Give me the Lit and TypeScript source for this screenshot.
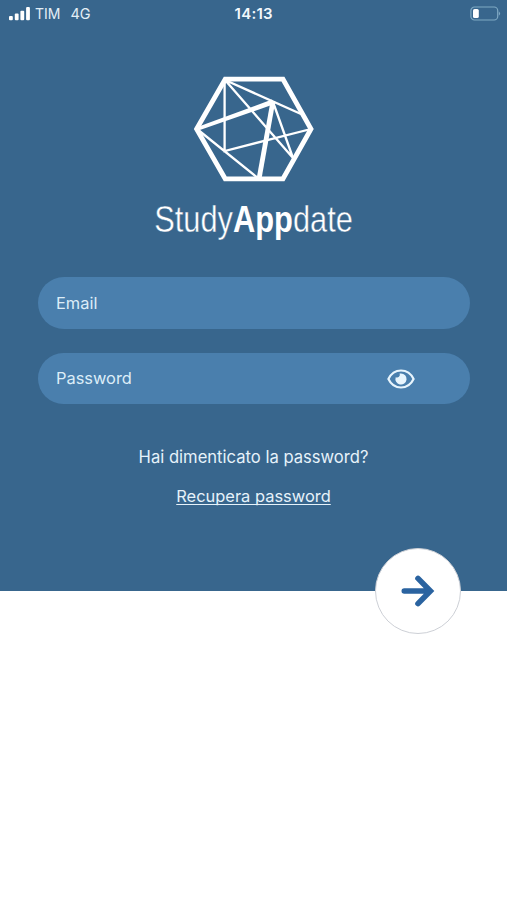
import { LitElement, html, css } from "lit";
import { customElement } from "lit/decorators.js";

@customElement("status-bar")
export class StatusBar extends LitElement {
  static styles = css`
    :host { display: grid; grid-template-columns: 1fr auto 1fr; align-items: center; height: 28px; padding: 0 6.5px 0 9px; color: #e3eef6; font: 400 14px/28px Inter, sans-serif; }
    .carrier { display: flex; align-items: center; }
    .signal { margin-right: 5px; }
    .network { margin-left: 10px; font-size: 14.5px; }
    .time { margin-right: 2px; font-weight: 600; font-size: 15px; letter-spacing: 0.25px; color: #f2f8fc; }
    .battery { justify-self: end; margin-top: -1px; }
    svg { display: block; }
  `;
  render() {
    return html`
      <div class="carrier">
        <svg class="signal" width="21" height="14" viewBox="0 0 21 14" fill="#fff">
          <rect x="0" y="9" width="3.8" height="4.2" rx="1" />
          <rect x="5.8" y="6.6" width="3.8" height="6.6" rx="1" />
          <rect x="11.4" y="3.8" width="3.8" height="9.4" rx="1" />
          <rect x="17.1" y="0" width="3.8" height="13.2" rx="1" />
        </svg>
        <span>TIM</span><span class="network">4G</span>
      </div>
      <div class="time">14:13</div>
      <svg class="battery" width="31" height="15" viewBox="0 0 31 15">
        <rect x="0.9" y="1" width="26.8" height="13" rx="3.6" fill="none" stroke="#7fa9c4" stroke-width="1.2" />
        <path d="M28.8 5.2 Q31.4 7.5 28.8 9.8 Z" fill="#7fa9c4" />
        <rect x="3" y="3" width="5.8" height="9" rx="1.6" fill="#fff" />
      </svg>`;
  }
}

@customElement("app-root")
export class AppRoot extends LitElement {
  static styles = css`
    :host { display: block; min-height: 900px; background: #fff; font-family: Inter, sans-serif; }
    .hero { position: relative; display: flex; flex-direction: column; height: 591px; background: #38668d; color: #e6f2fa; }
    svg { display: block; }
    .mark { margin: 46px auto 0; }
    .brand { margin: 10px auto 0; fill: #fff; font-family: "Liberation Sans", sans-serif; font-size: 37px; }
    .light { font-weight: 400; stroke: #38668d; stroke-width: 0.45px; }
    .bold { font-weight: 700; }
    .fields { display: flex; flex-direction: column; gap: 24px; margin: 29px 37px 0 37.5px; }
    .field { display: flex; align-items: center; box-sizing: border-box; height: 51.5px; padding: 0 55px 0 18.5px; border-radius: 26px; background: #4a7fad; }
    input { flex: 1; min-width: 0; border: 0; padding: 0; outline: 0; background: none; color: inherit; font: 400 16.4px/20px Inter, sans-serif; }
    input::placeholder { color: #dcedf8; opacity: 1; }
    .help { display: flex; flex-direction: column; align-items: center; margin-top: 42px; font-size: 16.6px; line-height: 22px; }
    .recover { margin-top: 17px; color: inherit; font-size: 16.45px; text-decoration: underline; text-decoration-thickness: 1px; text-underline-offset: 2px; text-decoration-skip-ink: none; }
    .submit { position: absolute; right: 46px; bottom: -43px; display: grid; place-items: center; box-sizing: border-box; width: 86px; height: 86px; padding: 0; border: 1px solid #cdd0d6; border-radius: 50%; background: #fff; }
    .eye { margin-top: 1px; }
  `;
  render() {
    return html`
      <main class="hero">
        <status-bar></status-bar>
        <svg class="mark" width="128" height="110" viewBox="190 74 128 110" fill="none" stroke="#fff">
          <path d="M196.6 129 225.2 79.2H283L311 129 283 178.8H225.2Z" stroke-width="4.8" />
          <path d="M225 80 301 114M225 80 293 158M224.6 80V151L311 129M197 129 259 179M273 102 293 158" stroke-width="2.3" />
          <path d="M196 127.5 272 99.5 274.5 104 197 131Z" fill="#fff" stroke="none" />
          <path d="M273 101 259 179" stroke-width="4.8" />
        </svg>
        <svg class="brand" width="202" height="54" viewBox="0 0 242.4 54" preserveAspectRatio="none">
          <text x="1.4" y="38"><tspan class="light">Study</tspan><tspan class="bold">App</tspan><tspan class="light">date</tspan></text>
        </svg>
        <form class="fields">
          <label class="field"><input type="email" placeholder="Email" aria-label="Email" /></label>
          <label class="field">
            <input type="password" placeholder="Password" aria-label="Password" />
            <svg class="eye" width="28" height="20" viewBox="0 0 28 20">
              <path d="M1.4 10C4.2 4.2 8.7 1.5 14 1.5S23.8 4.2 26.6 10C23.8 15.8 19.3 18.5 14 18.5S4.2 15.8 1.4 10Z" fill="none" stroke="#e8f5fd" stroke-width="2.2" stroke-linejoin="round" />
              <path d="M14 4.4A5.6 5.6 0 1 1 8.7 8.2A2.8 2.8 0 0 0 12.6 4.6Z" fill="#e8f5fd" />
            </svg>
          </label>
        </form>
        <div class="help">
          <span>Hai dimenticato la password?</span>
          <a class="recover">Recupera password</a>
        </div>
        <button class="submit" aria-label="Continua">
          <svg width="34" height="34" viewBox="0 0 34 34" fill="none" stroke="#2a63a0" stroke-width="5.6" stroke-linecap="round" stroke-linejoin="miter">
            <path d="M3.3 17H29M17 4.4 29.4 17 17 29.6" />
          </svg>
        </button>
      </main>`;
  }
}
